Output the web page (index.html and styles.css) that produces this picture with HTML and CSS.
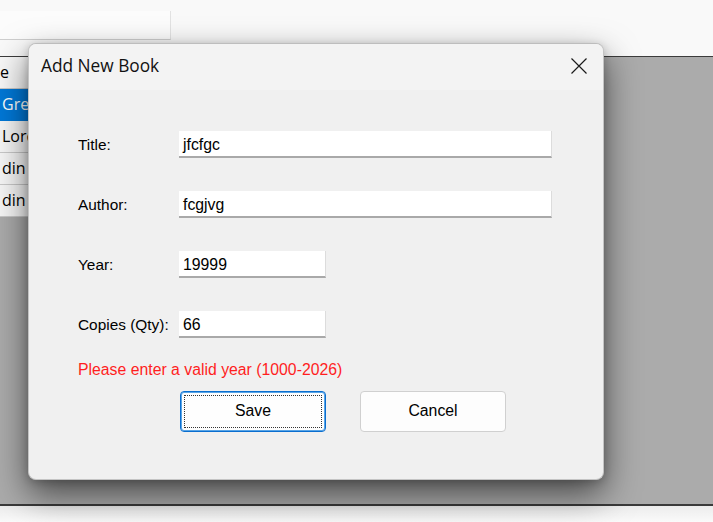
FILE: index.html
```html
<!DOCTYPE html>
<html>
<head>
<meta charset="utf-8">
<link rel="stylesheet" href="styles.css">
</head>
<body>
<div class="app">
  <div class="toolbar"><div class="search"></div></div>
  <div class="grid">
    <div class="gcol">
      <div class="cell head">e</div>
      <div class="cell sel">Gre</div>
      <div class="cell">Lord</div>
      <div class="cell">din s</div>
      <div class="cell">din</div>
    </div>
  </div>
  <div class="status"></div>
</div>

<div class="dialog">
  <div class="titlebar">
    <span class="title">Add New Book</span>
    <svg class="close" width="16" height="16" viewBox="0 0 16 16"><path d="M0.5 0.5L15.5 15.5M15.5 0.5L0.5 15.5" stroke="#1a1a1a" stroke-width="1.2" fill="none"/></svg>
  </div>
  <div class="body">
    <div class="row"><label class="lbl">Title:</label><div class="input wide">jfcfgc</div></div>
    <div class="row"><label class="lbl">Author:</label><div class="input wide">fcgjvg</div></div>
    <div class="row"><label class="lbl">Year:</label><div class="input short">19999</div></div>
    <div class="row"><label class="lbl">Copies (Qty):</label><div class="input short">66</div></div>
    <div class="error">Please enter a valid year (1000-2026)</div>
    <div class="buttons">
      <div class="btn primary"><span class="focus">Save</span></div>
      <div class="btn">Cancel</div>
    </div>
  </div>
</div>
</body>
</html>
```

FILE: styles.css
```css
html, body {
  margin: 0;
  padding: 0;
  width: 713px;
  height: 522px;
  overflow: hidden;
}
body {
  font-family: "Liberation Sans", Arial, sans-serif;
  background: #f9f9f9;
  position: relative;
}
.app {
  display: flex;
  flex-direction: column;
  height: 522px;
}
.toolbar {
  height: 56px;
  background: #f9f9f9;
  padding-top: 11px;
  box-sizing: border-box;
}
.search {
  width: 170px;
  height: 28px;
  background: #fcfcfc;
  border-right: 1px solid #e2e2e2;
  border-bottom: 1px solid #cfcfcf;
}
.grid {
  flex: 1;
  background: #ababab;
  border-top: 1px solid #3c3c3c;
  border-bottom: 2px solid #3a3a3a;
}
.gcol {
  width: 80px;
  display: flex;
  flex-direction: column;
}
.cell {
  height: 31px;
  border-bottom: 1px solid #c9c9c9;
  background: #f6f6f6;
  color: #000;
  font-family: "Open Sans", "Noto Sans", sans-serif;
  font-size: 16px;
  line-height: 31px;
  padding-left: 2px;
  white-space: nowrap;
  overflow: hidden;
}
.cell.head {
  padding-left: 0;
  background: #f7f7f7;
}
.cell.sel {
  background: #0078d7;
  color: #fff;
  border-bottom-color: #0078d7;
}
.status {
  height: 16px;
  background: linear-gradient(#ececec, #fafafa);
}
.dialog {
  position: absolute;
  left: 28px;
  top: 43px;
  width: 576px;
  height: 437px;
  box-sizing: border-box;
  border-radius: 8px;
  background: #f0f0f0;
  border: 1px solid #c4c4c4;
  border-top-color: #bdbdbd;
  box-shadow: 0 14px 34px rgba(0, 0, 0, 0.58), 0 2px 8px rgba(0, 0, 0, 0.18);
  overflow: hidden;
}
.titlebar {
  height: 46px;
  background: #f3f3f3;
  display: flex;
  align-items: center;
  justify-content: space-between;
  padding: 0 16px 0 12px;
}
.title {
  font-family: "Open Sans", "Noto Sans", sans-serif;
  font-size: 17.3px;
  color: #111;
  margin-top: -3px;
}
.close {
  margin-top: -3px;
}
.body {
  padding: 41px 0 0 49px;
  display: flex;
  flex-direction: column;
}
.row {
  display: flex;
  align-items: center;
  height: 27px;
  margin-bottom: 33px;
}
.lbl {
  width: 101px;
  font-size: 15.4px;
  color: #000;
  margin-top: 1px;
}
.input {
  height: 27px;
  box-sizing: border-box;
  background: #fff;
  border-bottom: 2px solid #a9a9a9;
  border-right: 1px solid #dcdcdc;
  font-size: 15.8px;
  line-height: 27px;
  padding-left: 4px;
  color: #000;
}
.wide { width: 373px; }
.short { width: 147px; }
.error {
  margin-top: -11px;
  color: #ff1e1e;
  font-size: 15.8px;
  height: 20px;
  line-height: 20px;
}
.buttons {
  display: flex;
  gap: 34px;
  margin-top: 11px;
  padding-left: 102px;
}
.btn {
  width: 146px;
  height: 41px;
  box-sizing: border-box;
  background: #fdfdfd;
  border: 1px solid #d0d0d0;
  border-radius: 4px;
  display: flex;
  align-items: center;
  justify-content: center;
  font-size: 15.8px;
  color: #000;
  padding-bottom: 2px;
}
.btn.primary {
  border: 1px solid #0a6ecf;
  box-shadow: inset 0 0 0 1px #5aa5e6;
  padding: 3px;
  background: #fefefe;
}
.focus {
  flex: 1;
  align-self: stretch;
  display: flex;
  align-items: center;
  justify-content: center;
  border: 1px dotted #333;
  padding-bottom: 2px;
}
```
